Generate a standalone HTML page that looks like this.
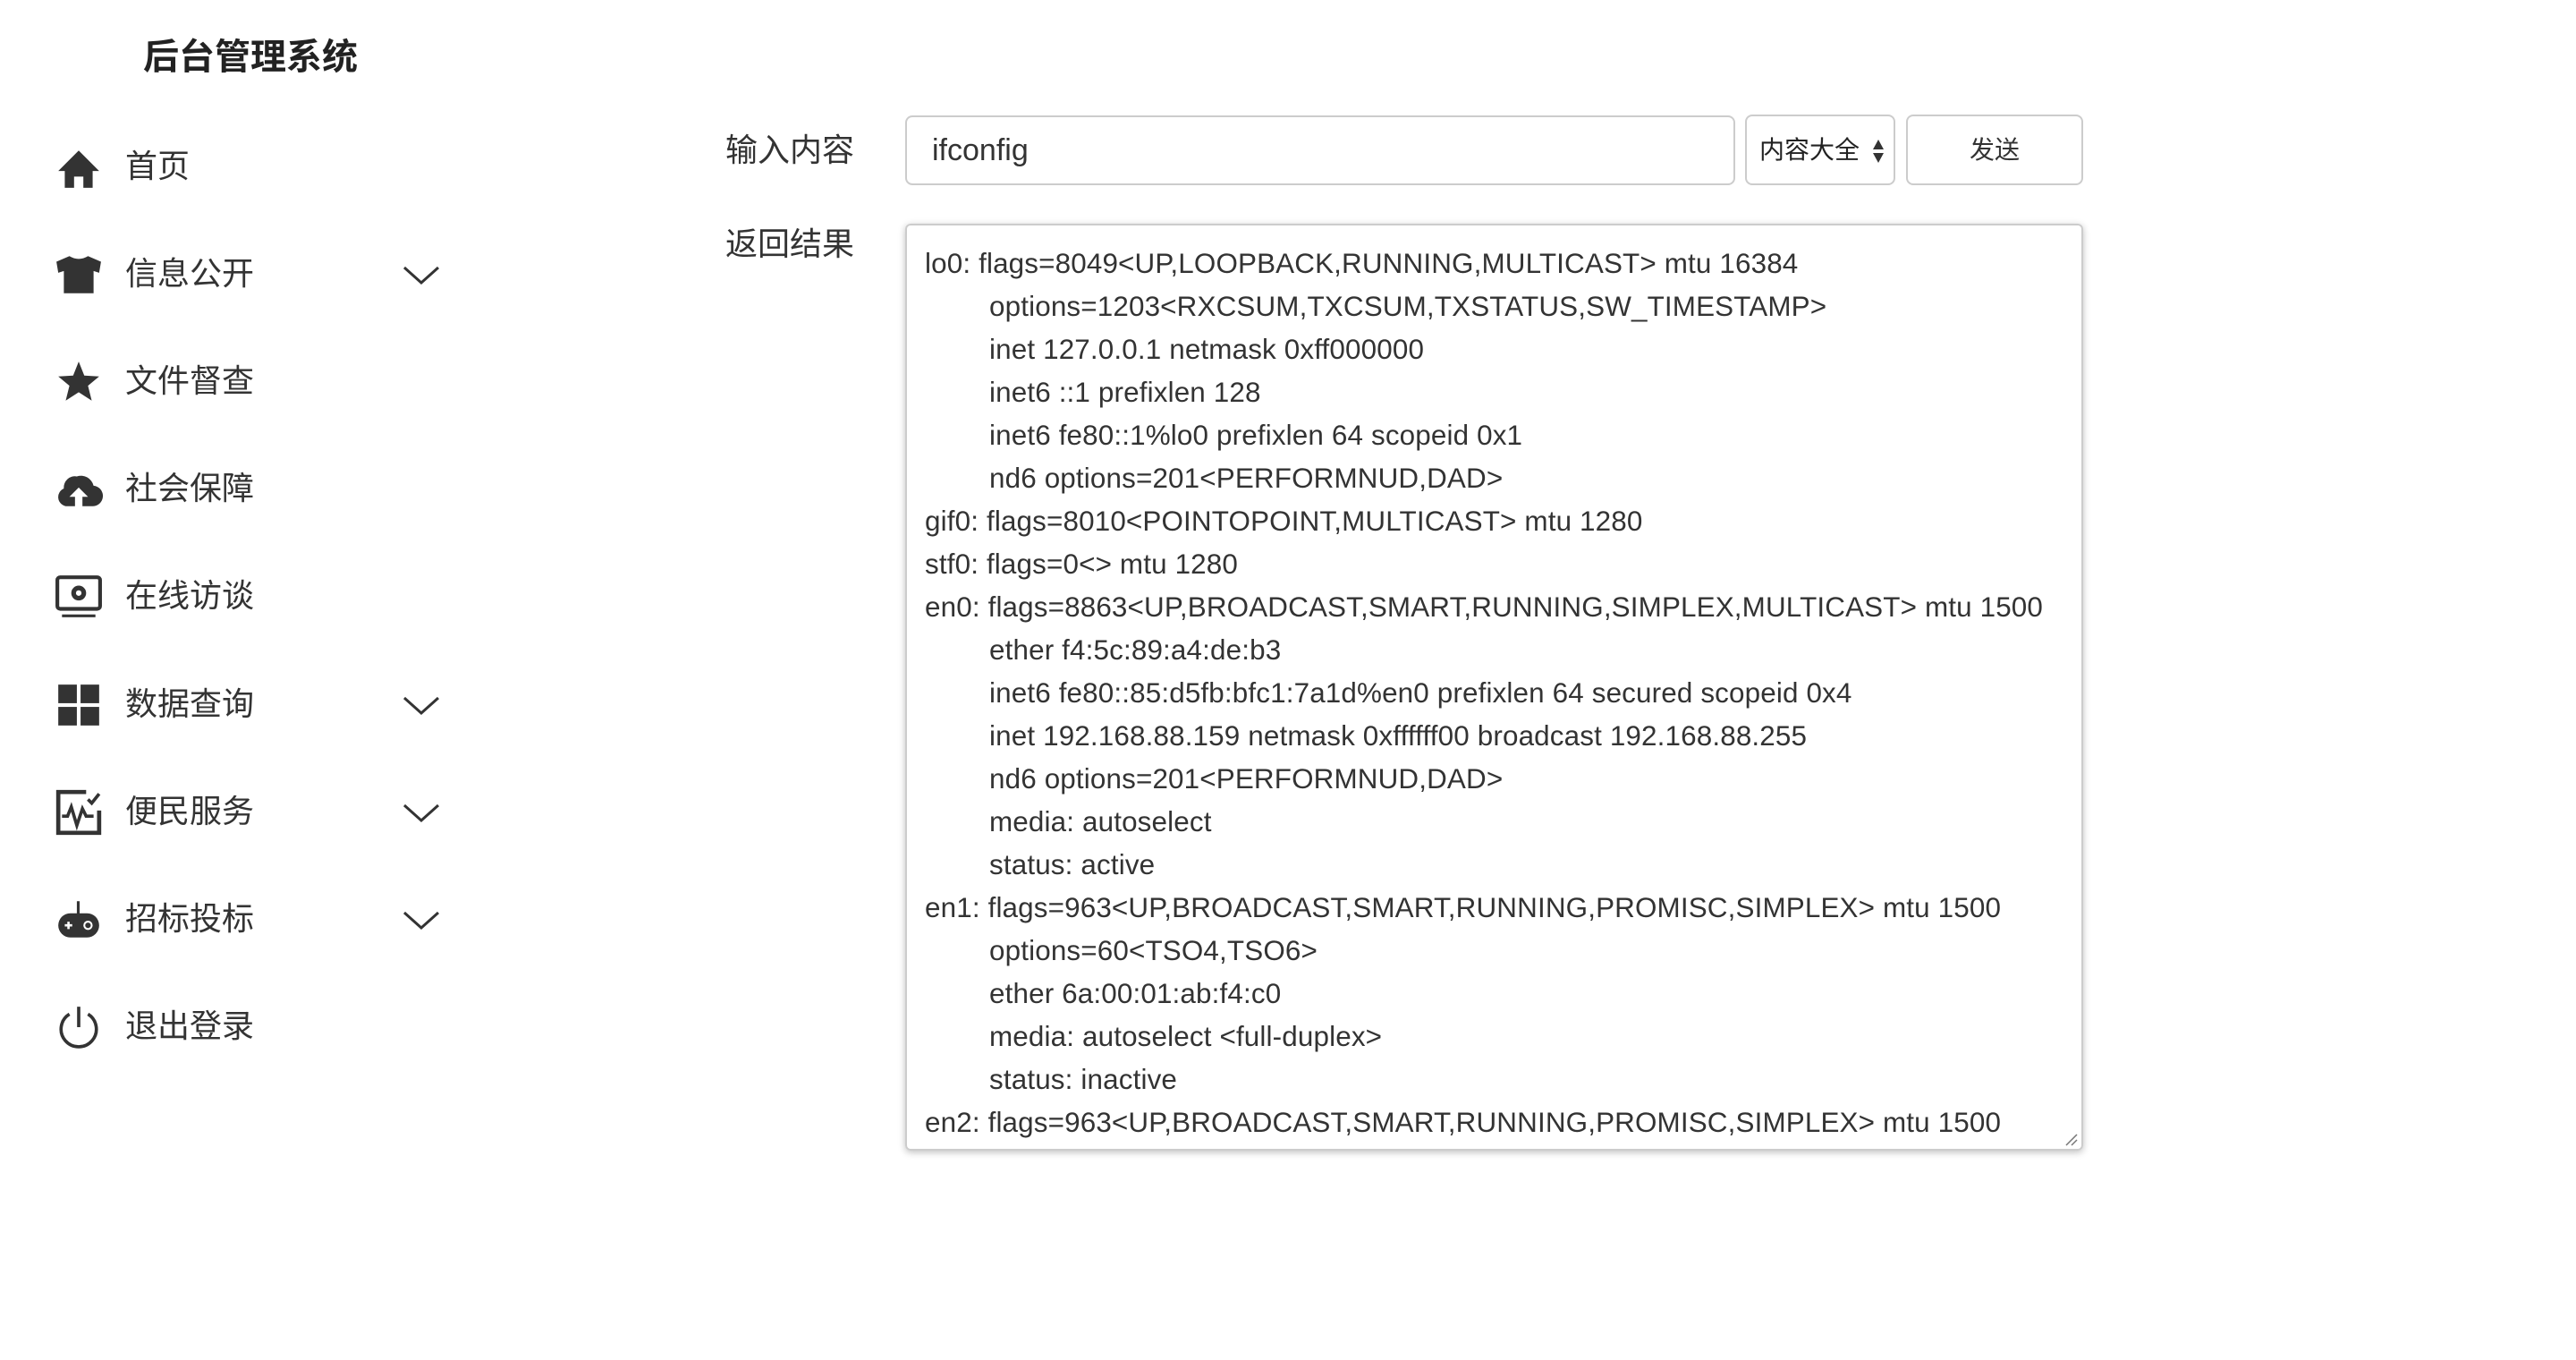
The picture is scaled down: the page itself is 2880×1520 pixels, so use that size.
<!DOCTYPE html>
<html><head><meta charset="utf-8"><style>
*{margin:0;padding:0;box-sizing:border-box}
body{width:2880px;height:1520px;background:#fff;font-family:"Liberation Sans","Noto Sans CJK SC",sans-serif;color:#333;position:relative;overflow:hidden}
.title{position:absolute;left:160px;top:31px;font-size:40px;font-weight:bold;color:#222}
.item{position:absolute;left:0;width:520px;height:60px}
.item svg.ic{position:absolute;left:61px;top:4px;width:54px;height:54px}
.item .t{position:absolute;left:140px;top:8px;font-size:36px;line-height:44px}
.item .ch{position:absolute;left:450px;top:20px;width:42px;height:24px}
.lbl{position:absolute;left:811px;font-size:36px;line-height:44px}
.box{position:absolute;border:2px solid #ccc;border-radius:8px;background:#fff}
.ta{position:absolute;left:1012px;top:250px;width:1317px;height:1036px;border:2px solid #ccc;border-radius:6px;box-shadow:0 2px 8px rgba(0,0,0,.25);padding:19px 0 0 20px;font-size:31.4px;letter-spacing:0.15px;line-height:48px;white-space:pre;overflow:hidden;tab-size:72px;-moz-tab-size:72px}
</style></head><body>
<div class="title">后台管理系统</div>

<div class="item" style="top:156px"><svg class="ic" viewBox="0 0 52 52"><path d="M26 8 L4 30 H11 V48 H21 V36 H31 V48 H41 V30 H48 Z" fill="#333"/></svg><span class="t">首页</span></div>
<div class="item" style="top:276px"><svg class="ic" viewBox="0 0 52 52"><path d="M16 6 Q26 12 36 6 L50 12 L48 24 L42 22 V46 H10 V22 L4 24 L2 12 Z" fill="#333"/></svg><span class="t">信息公开</span><svg class="ch" viewBox="0 0 42 24"><path d="M2 3 L21 20 L40 3" stroke="#333" stroke-width="3" fill="none"/></svg></div>
<div class="item" style="top:396px"><svg class="ic" viewBox="0 0 52 52"><path d="M26 4 L32 19 L48 20 L36 30 L40 46 L26 37 L12 46 L16 30 L4 20 L20 19 Z" fill="#333"/></svg><span class="t">文件督查</span></div>
<div class="item" style="top:516px"><svg class="ic" viewBox="0 0 52 52"><path d="M12 44 A10 10 0 0 1 10 25 A12 12 0 0 1 24 12 A14 14 0 0 1 42 22 A11 11 0 0 1 40 44 H30 V34 H36 L26 24 L16 34 H22 V44 Z" fill="#333"/></svg><span class="t">社会保障</span></div>
<div class="item" style="top:636px"><svg class="ic" viewBox="0 0 52 52"><rect x="3" y="5" width="46" height="34" rx="3" fill="none" stroke="#333" stroke-width="4"/><circle cx="26" cy="22" r="8" fill="#333"/><circle cx="26" cy="22" r="3" fill="#fff"/><rect x="8" y="45" width="36" height="3" fill="#333"/></svg><span class="t">在线访谈</span></div>
<div class="item" style="top:757px"><svg class="ic" viewBox="0 0 52 52"><rect x="4" y="4" width="20" height="20" fill="#333"/><rect x="28" y="4" width="20" height="20" fill="#333"/><rect x="4" y="28" width="20" height="20" fill="#333"/><rect x="28" y="28" width="20" height="20" fill="#333"/></svg><span class="t">数据查询</span><svg class="ch" viewBox="0 0 42 24"><path d="M2 3 L21 20 L40 3" stroke="#333" stroke-width="3" fill="none"/></svg></div>
<div class="item" style="top:877px"><svg class="ic" viewBox="0 0 52 52"><path d="M34 4 H4 V48 H48 V24" fill="none" stroke="#333" stroke-width="4.5"/><path d="M8 30 H14 L18 20 L24 40 L30 22 L34 30 H42" fill="none" stroke="#333" stroke-width="3.5"/><path d="M36 12 L40 16 L48 6" fill="none" stroke="#333" stroke-width="3.5"/></svg><span class="t">便民服务</span><svg class="ch" viewBox="0 0 42 24"><path d="M2 3 L21 20 L40 3" stroke="#333" stroke-width="3" fill="none"/></svg></div>
<div class="item" style="top:997px"><svg class="ic" viewBox="0 0 52 52"><rect x="24" y="6" width="3" height="14" fill="#333"/><rect x="4" y="19" width="44" height="26" rx="13" fill="#333"/><path d="M11 32 H19 M15 28 V36" stroke="#fff" stroke-width="2.5"/><circle cx="36" cy="32" r="4" fill="none" stroke="#fff" stroke-width="2"/></svg><span class="t">招标投标</span><svg class="ch" viewBox="0 0 42 24"><path d="M2 3 L21 20 L40 3" stroke="#333" stroke-width="3" fill="none"/></svg></div>
<div class="item" style="top:1117px"><svg class="ic" viewBox="0 0 52 52"><path d="M16 12 A19 19 0 1 0 36 12" fill="none" stroke="#333" stroke-width="3.5"/><path d="M26 4 V26" stroke="#333" stroke-width="3.5"/></svg><span class="t">退出登录</span></div>

<div class="lbl" style="top:146px">输入内容</div>
<div class="lbl" style="top:251px">返回结果</div>
<div class="box" style="left:1012px;top:129px;width:928px;height:78px"><span style="position:absolute;left:28px;top:16px;font-size:34px;line-height:42px">ifconfig</span></div>
<div class="box" style="left:1951px;top:128px;width:168px;height:79px"><span style="position:absolute;left:14px;top:20px;font-size:28px;line-height:36px;color:#222">内容大全</span><svg style="position:absolute;left:140px;top:24px" width="14" height="30" viewBox="0 0 14 30"><path d="M7 2 L13 13 H1 Z M7 28 L13 17 H1 Z" fill="#333"/></svg></div>
<div class="box" style="left:2131px;top:128px;width:198px;height:79px;text-align:center"><span style="display:block;margin-top:20px;font-size:28px;line-height:36px">发送</span></div>

<div class="ta">lo0: flags=8049&lt;UP,LOOPBACK,RUNNING,MULTICAST&gt; mtu 16384
	options=1203&lt;RXCSUM,TXCSUM,TXSTATUS,SW_TIMESTAMP&gt;
	inet 127.0.0.1 netmask 0xff000000
	inet6 ::1 prefixlen 128
	inet6 fe80::1%lo0 prefixlen 64 scopeid 0x1
	nd6 options=201&lt;PERFORMNUD,DAD&gt;
gif0: flags=8010&lt;POINTOPOINT,MULTICAST&gt; mtu 1280
stf0: flags=0&lt;&gt; mtu 1280
en0: flags=8863&lt;UP,BROADCAST,SMART,RUNNING,SIMPLEX,MULTICAST&gt; mtu 1500
	ether f4:5c:89:a4:de:b3
	inet6 fe80::85:d5fb:bfc1:7a1d%en0 prefixlen 64 secured scopeid 0x4
	inet 192.168.88.159 netmask 0xffffff00 broadcast 192.168.88.255
	nd6 options=201&lt;PERFORMNUD,DAD&gt;
	media: autoselect
	status: active
en1: flags=963&lt;UP,BROADCAST,SMART,RUNNING,PROMISC,SIMPLEX&gt; mtu 1500
	options=60&lt;TSO4,TSO6&gt;
	ether 6a:00:01:ab:f4:c0
	media: autoselect &lt;full-duplex&gt;
	status: inactive
en2: flags=963&lt;UP,BROADCAST,SMART,RUNNING,PROMISC,SIMPLEX&gt; mtu 1500</div>
<svg style="position:absolute;left:2308px;top:1266px" width="16" height="16" viewBox="0 0 16 16"><path d="M2 14 L14 2 M8 14 L14 8" stroke="#777" stroke-width="1.5"/></svg>
</body></html>
